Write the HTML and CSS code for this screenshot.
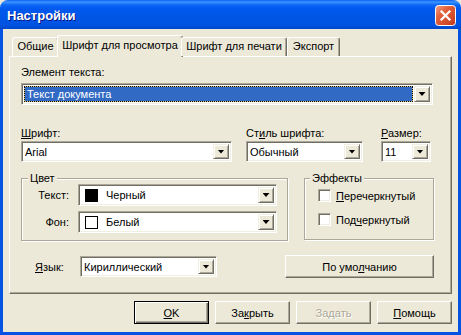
FILE: index.html
```html
<!DOCTYPE html>
<html lang="ru">
	<head>
		<meta charset="utf-8">
		<title>Настройки</title>
		<link rel="stylesheet" href="styles.css">
	</head>

	<body>
		<div class="window">
			<div class="titlebar">
				<span class="title">Настройки</span>
				<span class="close">
					<svg width="21" height="21" viewBox="0 0 21 21">
						<defs>
							<linearGradient id="closeFill" x1="0" y1="0" x2="1" y2="1">
								<stop offset="0" stop-color="#f2a58e"/>
								<stop offset="0.35" stop-color="#e2623c"/>
								<stop offset="1" stop-color="#c3381b"/>
							</linearGradient>
						</defs>
						<rect x="0.5" y="0.5" width="20" height="20" rx="3" fill="url(#closeFill)" stroke="#fff"/>
						<path d="M6.5 6.5l8 8M14.5 6.5l-8 8" stroke="#fff" stroke-width="2.2" stroke-linecap="square"/>
					</svg>
				</span>
			</div>

			<div class="body">
				<div class="tabs">
					<div class="tab tab-general">Общие</div>
					<div class="tab tab-view active">Шрифт для просмотра</div>
					<div class="tab tab-print">Шрифт для печати</div>
					<div class="tab tab-export">Экспорт</div>
				</div>

				<div class="panel">
					<div class="label">Элемент текста:</div>
					<div class="combo combo-element">
						<div class="combo-field selected">Текст документа</div>
						<span class="drop"></span>
					</div>

					<div class="font-row">
						<div class="field field-font">
							<div class="label"><u>Ш</u>рифт:</div>
							<div class="combo">
								<div class="combo-field">Arial</div>
								<span class="drop"></span>
							</div>
						</div>
						<div class="field field-style">
							<div class="label">Ст<u>и</u>ль шрифта:</div>
							<div class="combo">
								<div class="combo-field">Обычный</div>
								<span class="drop"></span>
							</div>
						</div>
						<div class="field field-size">
							<div class="label"><u>Р</u>азмер:</div>
							<div class="combo">
								<div class="combo-field">11</div>
								<span class="drop"></span>
							</div>
						</div>
					</div>

					<div class="groups">
						<fieldset class="group group-color">
							<legend>Цвет</legend>
							<div class="color-row">
								<span class="color-label">Текст:</span>
								<div class="combo combo-color">
									<div class="combo-field"><span class="swatch swatch-black"></span>Черный</div>
									<span class="drop"></span>
								</div>
							</div>
							<div class="color-row">
								<span class="color-label">Фон:</span>
								<div class="combo combo-color">
									<div class="combo-field"><span class="swatch"></span>Белый</div>
									<span class="drop"></span>
								</div>
							</div>
						</fieldset>

						<fieldset class="group group-effects">
							<legend>Эффекты</legend>
							<label class="check"><span class="box"></span><span><u>П</u>еречеркнутый</span></label>
							<label class="check"><span class="box"></span><span>Под<u>ч</u>еркнутый</span></label>
						</fieldset>
					</div>

					<div class="bottom-row">
						<span class="lang-label"><u>Я</u>зык:</span>
						<div class="combo combo-lang">
							<div class="combo-field">Кириллический</div>
							<span class="drop"></span>
						</div>
						<button class="btn btn-defaults">По умо<u>л</u>чанию</button>
					</div>
				</div>

				<div class="buttons">
					<button class="btn btn-ok"><u>O</u>K</button>
					<button class="btn">За<u>к</u>рыть</button>
					<button class="btn btn-disabled">За<u>д</u>ать</button>
					<button class="btn"><u>П</u>омощь</button>
				</div>
			</div>
		</div>
	</body>
</html>
```

FILE: styles.css
```css
html, body {
	margin: 0;
	background: #ece9d8;
}

body {
	font: 11px "Liberation Sans", "DejaVu Sans", sans-serif;
	color: #000;
}

u {
	text-underline-offset: 1px;
}

.window {
	width: 461px;
	height: 335px;
	display: flex;
	flex-direction: column;
}

/* title bar */
.titlebar {
	flex: none;
	height: 29px;
	box-sizing: border-box;
	display: flex;
	align-items: center;
	justify-content: space-between;
	padding: 1px 5px 0 7px;
	border-radius: 8px 8px 0 0;
	background: linear-gradient(#0a5ff5 0, #3d95ff 2px, #0a66f6 5px, #0058ee 9px, #0055e5 18px, #0053e1 25px, #0046cc 29px);
}

.title {
	color: #fff;
	font: bold 13px "Liberation Sans", "DejaVu Sans", sans-serif;
	text-shadow: 1px 1px 0 #0a1883;
}

.close svg {
	display: block;
}

/* dialog body */
.body {
	flex: 1;
	display: flex;
	flex-direction: column;
	padding: 6px 6px 0;
	background: #ece9d8;
	border: 3px solid #0553e2;
	border-top: 0;
}

.tabs {
	position: relative;
	z-index: 1;
	display: flex;
	align-items: flex-end;
	height: 21px;
	padding-left: 3px;
}

.tab {
	box-sizing: border-box;
	height: 19px;
	line-height: 17px;
	text-align: center;
	white-space: nowrap;
	background: #ece9d8;
	border: 1px solid;
	border-color: #fff #716f64 transparent #fff;
	border-bottom: 0;
	border-radius: 3px 3px 0 0;
	box-shadow: inset -1px 0 0 #aca899;
}

.tab-general { width: 47px; }
.tab-view { width: 122px; }
.tab-print { width: 106px; }
.tab-export { width: 53px; }

.tab.active {
	width: 126px;
	height: 22px;
	margin: 0 -2px -1px;
	line-height: 19px;
}

.panel {
	box-sizing: border-box;
	height: 238px;
	padding: 9px 0 0 11px;
	border: 1px solid;
	border-color: #fff #716f64 #716f64 #fff;
	box-shadow: inset -1px -1px 0 #aca899;
}

.label {
	line-height: 13px;
	white-space: nowrap;
}

/* combo boxes */
.combo {
	box-sizing: border-box;
	display: flex;
	height: 21px;
	padding: 2px;
	background: #fff;
	border: 1px solid;
	border-color: #aca899 #fff #fff #aca899;
	box-shadow: inset 1px 1px 0 #716f64, inset -1px -1px 0 #f1efe2;
}

.combo-field {
	flex: 1;
	display: flex;
	align-items: center;
	padding-left: 1px;
	white-space: nowrap;
	overflow: hidden;
}

.drop {
	flex: none;
	box-sizing: border-box;
	width: 16px;
	display: flex;
	align-items: center;
	justify-content: center;
	background: #ece9d8;
	border: 1px solid;
	border-color: #f1efe2 #716f64 #716f64 #f1efe2;
	box-shadow: inset 1px 1px 0 #fff, inset -1px -1px 0 #aca899;
}

.drop::after {
	content: "";
	width: 7px;
	height: 4px;
	background: #000;
	clip-path: polygon(0 0, 100% 0, 50% 100%);
}

.combo-element {
	width: 412px;
	height: 22px;
	margin-top: 4px;
}

.selected {
	color: #fff;
	padding-left: 2px;
	margin-right: 1px;
	border: 1px dotted #000;
	background: linear-gradient(#316ac5, #316ac5) padding-box, #d8c47a;
}

.font-row {
	display: flex;
	margin-top: 22px;
}

.field .combo {
	margin-top: 1px;
}

.field-font { width: 211px; }
.field-style { width: 117px; margin-left: 14px; }
.field-size { width: 50px; margin-left: 18px; }

/* group boxes */
.groups {
	display: flex;
	margin-top: 10px;
}

.group {
	box-sizing: border-box;
	margin: 0;
	min-width: 0;
	border: 1px solid #aca899;
	box-shadow: inset 1px 1px 0 #fff, 1px 1px 0 #fff;
}

.group legend {
	padding: 0 2px;
	line-height: 12px;
	background: #ece9d8;
}

.group-color {
	width: 267px;
	height: 69px;
	padding: 0 10px 0 6px;
}

.group-effects {
	width: 130px;
	height: 68px;
	margin-left: 16px;
	padding: 0 0 0 5px;
}

.color-row {
	display: flex;
	align-items: center;
}

.color-row + .color-row {
	margin-top: 5px;
}

.color-label {
	width: 41px;
	margin-right: 9px;
	text-align: right;
}

.combo-color {
	width: 199px;
	height: 22px;
}

.combo-color .combo-field {
	padding-left: 4px;
}

.swatch {
	box-sizing: border-box;
	width: 13px;
	height: 13px;
	margin-right: 8px;
	border: 1px solid #000;
	background: #fff;
}

.swatch-black {
	background: #000;
}

.check {
	display: flex;
	align-items: center;
	height: 13px;
	margin: 5px 0 0 8px;
	white-space: nowrap;
}

.check + .check {
	margin-top: 11px;
}

.box {
	box-sizing: border-box;
	width: 13px;
	height: 13px;
	margin-right: 5px;
	background: #fff;
	border: 1px solid;
	border-color: #aca899 #fff #fff #aca899;
	box-shadow: inset 1px 1px 0 #716f64, inset -1px -1px 0 #f1efe2;
}

/* language row */
.bottom-row {
	display: flex;
	align-items: center;
	height: 23px;
	margin-top: 14px;
}

.lang-label {
	width: 45px;
	margin-left: 14px;
}

.combo-lang {
	width: 137px;
}

/* buttons */
.btn {
	box-sizing: border-box;
	width: 75px;
	height: 23px;
	padding: 0;
	font: inherit;
	color: #000;
	background: #ece9d8;
	border: 1px solid;
	border-color: #fff #716f64 #716f64 #fff;
	box-shadow: inset -1px -1px 0 #aca899;
}

.btn-defaults {
	width: 149px;
	margin-left: 68px;
}

.btn-ok {
	border-color: #000;
	box-shadow: inset 1px 1px 0 #fff, inset -1px -1px 0 #716f64, inset -2px -2px 0 #aca899;
}

.btn-disabled {
	color: #aca899;
	text-shadow: 1px 1px 0 #fff;
}

.buttons {
	display: flex;
	justify-content: flex-end;
	gap: 6px;
	margin-top: 7px;
}
```
